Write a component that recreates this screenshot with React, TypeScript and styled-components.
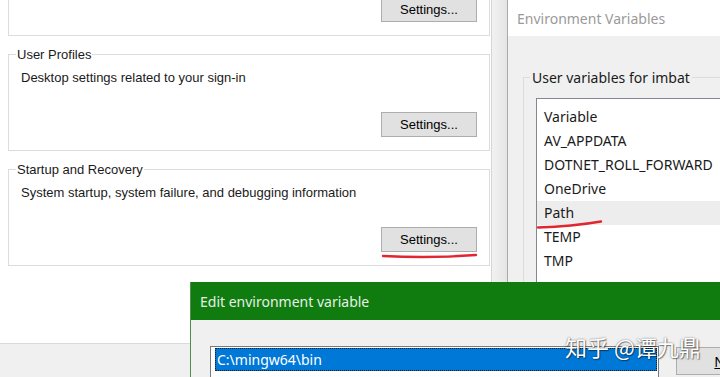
import styled, { createGlobalStyle } from "styled-components";

const GlobalStyle = createGlobalStyle`
  html, body {
    margin: 0;
    padding: 0;
    background: #f0f0f0;
  }
  * {
    box-sizing: border-box;
  }
`;

const groups = [
  {
    title: "Performance",
    text: "Visual effects, processor scheduling, memory usage, and virtual memory",
  },
  { title: "User Profiles", text: "Desktop settings related to your sign-in" },
  {
    title: "Startup and Recovery",
    text: "System startup, system failure, and debugging information",
  },
];

const userVars = ["AV_APPDATA", "DOTNET_ROLL_FORWARD", "OneDrive", "Path", "TEMP", "TMP"];

const App = () => {
  return (
    <>
      <GlobalStyle />
      <Desktop>
        <SystemDialog>
          <TabPage>
            {groups.map((g) => (
              <Group key={g.title} $gap={18}>
                <Legend>{g.title}</Legend>
                <GroupText>{g.text}</GroupText>
                <ButtonRow>
                  <Button>Settings...</Button>
                </ButtonRow>
              </Group>
            ))}
          </TabPage>
        </SystemDialog>

        <EnvDialog>
          <TitleBar>Environment Variables</TitleBar>
          <EnvBody>
            <EnvGroup>
              <EnvLegend>User variables for imbat</EnvLegend>
              <ListBox>
                <ListRow>Variable</ListRow>
                {userVars.map((v) => (
                  <ListRow key={v} $hover={v === "Path"}>
                    {v}
                  </ListRow>
                ))}
              </ListBox>
            </EnvGroup>
          </EnvBody>
        </EnvDialog>

        <EditDialog>
          <EditTitle>Edit environment variable</EditTitle>
          <EditBody>
            <PathList>
              <SelectedRow>C:\mingw64\bin</SelectedRow>
            </PathList>
            <SideButton>
              <u>N</u>ew
            </SideButton>
          </EditBody>
        </EditDialog>

        <Watermark>知乎 @谭九鼎</Watermark>

        <Marks width="720" height="377" viewBox="0 0 720 377">
          <path d="M383 256 Q430 258.5 476 255" />
          <path d="M538 227.5 Q572 226.5 601 221.5" />
        </Marks>
      </Desktop>
    </>
  );
};

const Desktop = styled.div`
  position: relative;
  width: 720px;
  height: 377px;
  overflow: hidden;
  background: #f0f0f0;
`;

/* windows on the desktop */
const SystemDialog = styled.div`
  position: absolute;
  left: 0;
  top: -77px;
  width: 508px;
  height: 470px;
  background: linear-gradient(to right, #f0f0f0 0, #f0f0f0 494px, #e4e4e4 508px);
`;

const TabPage = styled.div`
  width: 492px;
  height: 421px;
  background: #fff;
  border-right: 1px solid #d6d6d6;
  border-bottom: 1px solid #d9d9d9;
  padding: 16px 0 0 8px;
  display: flex;
  flex-direction: column;
  font-family: "Liberation Sans", Arial, sans-serif;
  font-size: 13px;
  color: #1a1a1a;
`;

const Group = styled.div<{ $gap: number }>`
  width: 482px;
  border: 1px solid #dcdcdc;
  display: flex;
  flex-direction: column;
  padding: 0 12px 13px 12px;
  & + & {
    margin-top: ${({ $gap }) => $gap}px;
  }
`;

const Legend = styled.div`
  align-self: flex-start;
  margin: -8px 0 0 -5px;
  padding: 0 1px;
  line-height: 15px;
  background: #fff;
`;

const GroupText = styled.div`
  margin-top: 8px;
  line-height: 15px;
`;

const ButtonRow = styled.div`
  display: flex;
  justify-content: flex-end;
  margin-top: 27px;
`;

const Button = styled.div`
  width: 96px;
  height: 25px;
  display: flex;
  align-items: center;
  justify-content: center;
  background: #e1e1e1;
  border: 1px solid #adadad;
  font-size: 13px;
  color: #000;
`;

const EnvDialog = styled.div`
  position: absolute;
  left: 507px;
  top: 0;
  width: 320px;
  height: 420px;
  border-left: 1px solid #a9a9a9;
  display: flex;
  flex-direction: column;
  font-family: "Noto Sans", "Open Sans", sans-serif;
  font-size: 14px;
  color: #1a1a1a;
`;

const TitleBar = styled.div`
  height: 36px;
  flex: none;
  display: flex;
  align-items: center;
  padding-left: 9px;
  background: #fff;
  color: #9a9a9a;
`;

const EnvBody = styled.div`
  flex: 1;
  background: #f0f0f0;
  padding: 41px 0 0 15px;
`;

const EnvGroup = styled.div`
  border: 1px solid #dcdcdc;
  border-right: none;
  height: 320px;
  padding-left: 12px;
  display: flex;
  flex-direction: column;
`;

const EnvLegend = styled.div`
  align-self: flex-start;
  margin: -10px 0 0 -6px;
  padding: 0 2px;
  line-height: 20px;
  background: #f0f0f0;
`;

const ListBox = styled.div`
  margin-top: 10px;
  background: #fff;
  border: 1px solid #828790;
  border-right: none;
  padding-top: 6px;
  flex: 1;
`;

const ListRow = styled.div<{ $hover?: boolean }>`
  height: 24px;
  line-height: 24px;
  padding-left: 7px;
  white-space: nowrap;
  background: ${({ $hover }) => ($hover ? "#ededed" : "transparent")};
`;

const EditDialog = styled.div`
  position: absolute;
  left: 190px;
  top: 282px;
  width: 720px;
  height: 140px;
  border-left: 1px solid #4d8f4d;
  display: flex;
  flex-direction: column;
  font-family: "Noto Sans", "Open Sans", sans-serif;
  font-size: 14px;
`;

const EditTitle = styled.div`
  height: 38px;
  flex: none;
  display: flex;
  align-items: center;
  padding-left: 9px;
  background: #107c10;
  color: #e4f0e4;
`;

const EditBody = styled.div`
  flex: 1;
  background: #f0f0f0;
  display: flex;
  align-items: flex-start;
  padding: 26px 0 0 19px;
  gap: 17px;
`;

const PathList = styled.div`
  flex: none;
  width: 449px;
  height: 80px;
  background: #fff;
  border: 1px solid #7a7a7a;
  padding: 1px 0 0 4px;
`;

const SelectedRow = styled.div`
  height: 23px;
  width: 442px;
  line-height: 23px;
  padding-left: 2px;
  background: #0078d7;
  color: #fff;
  outline: 1px dotted #1a1a1a;
  outline-offset: -1px;
`;

const SideButton = styled.div`
  flex: none;
  width: 106px;
  height: 28px;
  margin-top: 1px;
  background: #e1e1e1;
  border: 1px solid #adadad;
  display: flex;
  align-items: center;
  justify-content: center;
  color: #000;
`;

const Watermark = styled.div`
  position: absolute;
  left: 565px;
  top: 332px;
  font-family: "Noto Sans CJK SC", sans-serif;
  font-size: 22px;
  line-height: 28px;
  color: #fff;
  white-space: nowrap;
  text-shadow: 0 0 2px rgba(0, 0, 0, 0.55), 1px 1px 1px rgba(0, 0, 0, 0.4);
`;

const Marks = styled.svg`
  position: absolute;
  left: 0;
  top: 0;
  pointer-events: none;
  path {
    fill: none;
    stroke: #e0262e;
    stroke-width: 2.4;
    stroke-linecap: round;
  }
`;

export default App;
